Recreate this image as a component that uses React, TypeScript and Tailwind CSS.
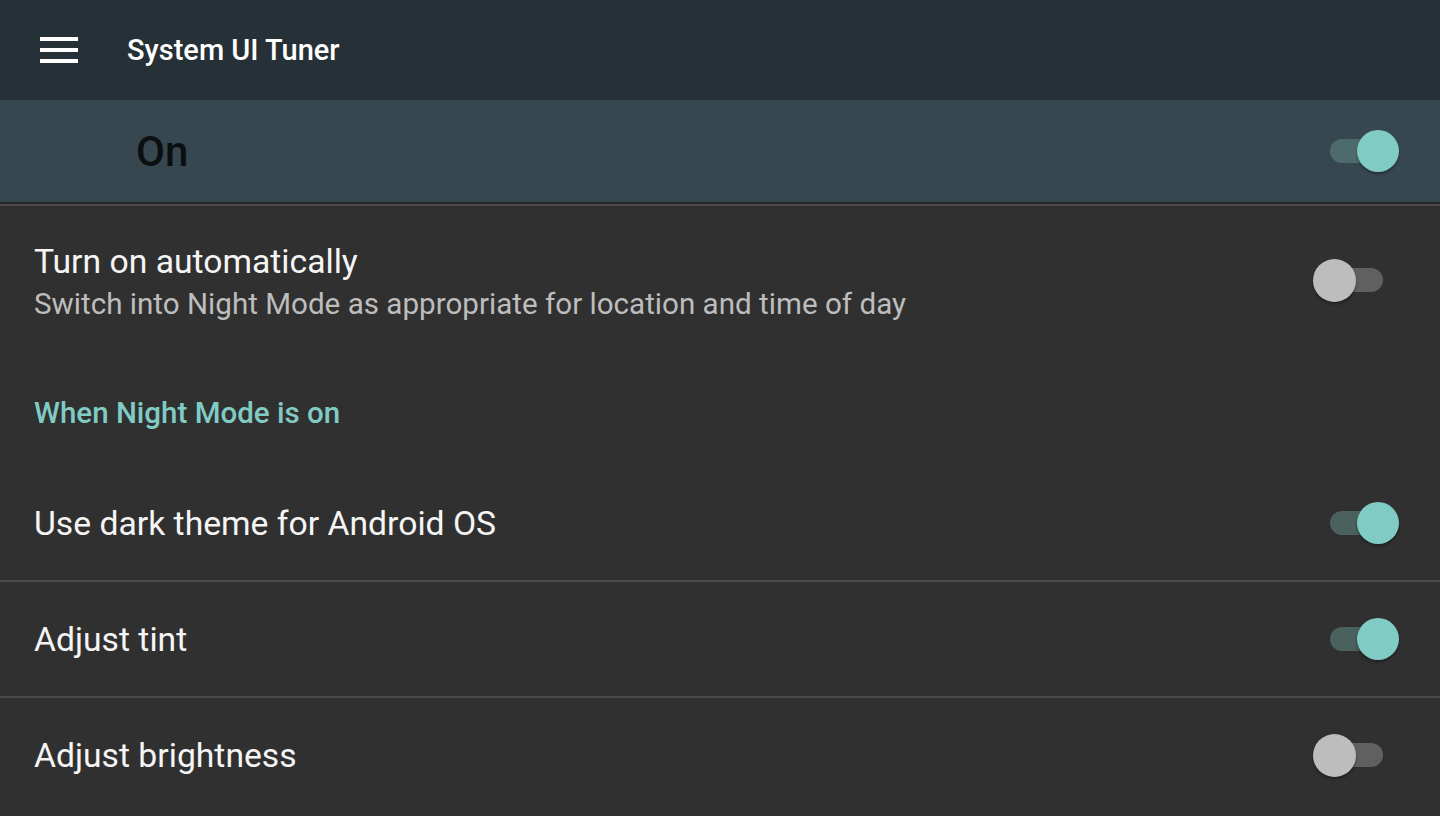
import { FC } from "react";

const Toggle: FC<{ on: boolean; dark?: boolean; className?: string }> = ({ on, dark, className }) => {
	return (
		<div className={`relative w-[86px] h-[44px] shrink-0 ${className ?? ""}`}>
			<div
				className={
					on
						? dark
							? "absolute left-[17px] top-[10px] w-[56px] h-[24px] rounded-full bg-[#4e6b6b]"
							: "absolute left-[17px] top-[10px] w-[56px] h-[24px] rounded-full bg-[#4a615e]"
						: "absolute left-[14px] top-[10px] w-[56px] h-[24px] rounded-full bg-[#606060]"
				}
			/>
			<div
				className={
					on
						? "absolute left-[44px] top-[1px] w-[42px] h-[42px] rounded-full bg-[#80cbc4] shadow-[0_2px_3px_rgba(0,0,0,0.35)]"
						: "absolute left-0 top-[1px] w-[43px] h-[43px] rounded-full bg-[#bdbdbd] shadow-[0_2px_3px_rgba(0,0,0,0.35)]"
				}
			/>
		</div>
	);
};

const Row: FC<{ title: string; on: boolean; height: string }> = ({ title, on, height }) => {
	return (
		<div className={`flex items-center justify-between pl-[34px] pr-[41px] ${height}`}>
			<span className="pt-[3px] text-[33.7px] text-[#f5f5f5]">{title}</span>
			<Toggle on={on} />
		</div>
	);
};

const App: FC = () => {
	return (
		<div className="w-[1440px] h-[816px] overflow-hidden bg-[#303030] font-['Roboto',sans-serif]">
			<div className="flex items-center h-[100px] bg-[#263037]">
				<div className="flex flex-col gap-[7px] ml-[40px] w-[38px]">
					<span className="h-[4px] bg-white" />
					<span className="h-[4px] bg-white" />
					<span className="h-[4px] bg-white" />
				</div>
				<h1 className="ml-[49px] pt-[2px] text-[29px] font-medium text-white">System UI Tuner</h1>
			</div>

			<div className="flex items-center justify-between h-[102px] bg-[#37474f] pl-[136px] pr-[41px]">
				<span className="text-[42px] font-medium text-[#0c0f10]">On</span>
				<Toggle on dark />
			</div>
			<div className="h-[2px] bg-[#232729]" />
			<div className="h-[2px] bg-[#4a4a4a]" />

			<div className="flex items-center justify-between h-[156px] pl-[34px] pr-[41px]">
				<div className="flex flex-col">
					<span className="text-[33.7px] leading-[40px] text-[#f5f5f5]">Turn on automatically</span>
					<span className="text-[29.6px] leading-[44px] text-[#bdbdbd]">
						Switch into Night Mode as appropriate for location and time of day
					</span>
				</div>
				<Toggle on={false} className="mb-[8px]" />
			</div>

			<div className="flex items-center h-[103px] pl-[34px]">
				<span className="text-[29.5px] font-medium text-[#80cbc4]">When Night Mode is on</span>
			</div>

			<Row title="Use dark theme for Android OS" on height="h-[115px]" />
			<div className="h-[2px] bg-[#4a4a4a]" />
			<Row title="Adjust tint" on height="h-[114px]" />
			<div className="h-[2px] bg-[#4a4a4a]" />
			<Row title="Adjust brightness" on={false} height="h-[114px]" />
		</div>
	);
};

export default App;
